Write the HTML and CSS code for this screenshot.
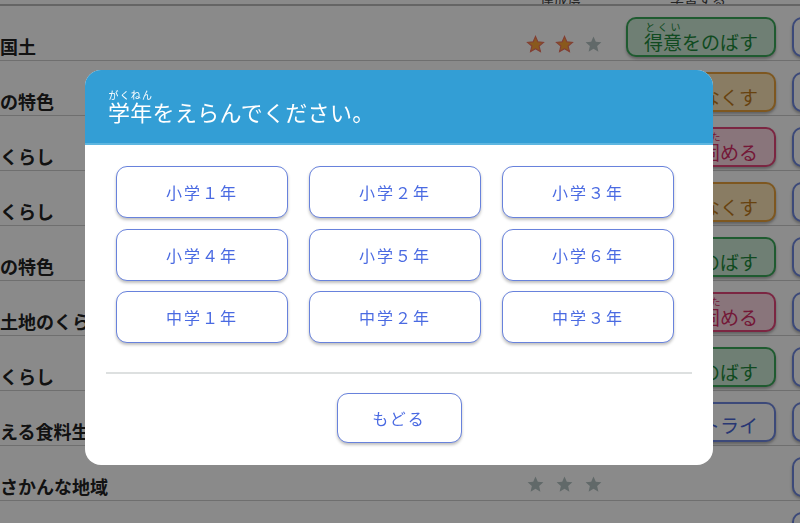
FILE: index.html
```html
<!DOCTYPE html>
<html lang="ja">

<head>
    <meta charset="UTF-8">
    <meta name="viewport" content="width=device-width, initial-scale=1.0">
    <title>学年をえらぶ</title>
    <link rel="stylesheet" href="styles.css">
</head>

<body>
    <div class="list">
        <div class="list-head">
            <span class="head-stars">達成度</span>
            <span class="head-btn">学習する</span>
        </div>

        <div class="row">
            <div class="name">国土</div>
            <div class="stars">
                <svg class="star on" viewBox="0 0 24 24"><polygon points="12,2 14.9,8.6 22,9.3 16.6,14 18.2,21 12,17.3 5.8,21 7.4,14 2,9.3 9.1,8.6"/></svg>
                <svg class="star on" viewBox="0 0 24 24"><polygon points="12,2 14.9,8.6 22,9.3 16.6,14 18.2,21 12,17.3 5.8,21 7.4,14 2,9.3 9.1,8.6"/></svg>
                <svg class="star" viewBox="0 0 24 24"><polygon points="12,2 14.9,8.6 22,9.3 16.6,14 18.2,21 12,17.3 5.8,21 7.4,14 2,9.3 9.1,8.6"/></svg>
            </div>
            <button class="task green"><ruby>得意<rt>とくい</rt></ruby>をのばす</button>
            <button class="task blue">もくじ</button>
        </div>

        <div class="row">
            <div class="name">の特色</div>
            <div class="stars"></div>
            <button class="task yellow"><ruby>苦手<rt>にがて</rt></ruby>をなくす</button>
            <button class="task blue">もくじ</button>
        </div>

        <div class="row">
            <div class="name">くらし</div>
            <div class="stars"></div>
            <button class="task pink">きそを<ruby>固<rt>かた</rt></ruby>める</button>
            <button class="task blue">もくじ</button>
        </div>

        <div class="row">
            <div class="name">くらし</div>
            <div class="stars"></div>
            <button class="task yellow"><ruby>苦手<rt>にがて</rt></ruby>をなくす</button>
            <button class="task blue">もくじ</button>
        </div>

        <div class="row">
            <div class="name">の特色</div>
            <div class="stars"></div>
            <button class="task green"><ruby>得意<rt>とくい</rt></ruby>をのばす</button>
            <button class="task blue">もくじ</button>
        </div>

        <div class="row">
            <div class="name">土地のくらし</div>
            <div class="stars"></div>
            <button class="task pink">きそを<ruby>固<rt>かた</rt></ruby>める</button>
            <button class="task blue">もくじ</button>
        </div>

        <div class="row">
            <div class="name">くらし</div>
            <div class="stars"></div>
            <button class="task green"><ruby>得意<rt>とくい</rt></ruby>をのばす</button>
            <button class="task blue">もくじ</button>
        </div>

        <div class="row">
            <div class="name">える食料生産</div>
            <div class="stars"></div>
            <button class="task blue">苦手にトライ</button>
            <button class="task blue">もくじ</button>
        </div>

        <div class="row">
            <div class="name">さかんな地域</div>
            <div class="stars">
                <svg class="star" viewBox="0 0 24 24"><polygon points="12,2 14.9,8.6 22,9.3 16.6,14 18.2,21 12,17.3 5.8,21 7.4,14 2,9.3 9.1,8.6"/></svg>
                <svg class="star" viewBox="0 0 24 24"><polygon points="12,2 14.9,8.6 22,9.3 16.6,14 18.2,21 12,17.3 5.8,21 7.4,14 2,9.3 9.1,8.6"/></svg>
                <svg class="star" viewBox="0 0 24 24"><polygon points="12,2 14.9,8.6 22,9.3 16.6,14 18.2,21 12,17.3 5.8,21 7.4,14 2,9.3 9.1,8.6"/></svg>
            </div>
            <div></div>
            <button class="task blue">もくじ</button>
        </div>

        <div class="row">
            <div class="name"></div>
            <div class="stars"></div>
            <div></div>
            <button class="task blue">もくじ</button>
        </div>
    </div>

    <!-- 学年えらびのダイアログ -->
    <div class="overlay">
        <div class="modal">
            <div class="modal-header">
                <h1><ruby>学年<rt>がくねん</rt></ruby>をえらんでください。</h1>
            </div>
            <div class="grade-grid">
                <button class="grade">小学１年</button>
                <button class="grade">小学２年</button>
                <button class="grade">小学３年</button>
                <button class="grade">小学４年</button>
                <button class="grade">小学５年</button>
                <button class="grade">小学６年</button>
                <button class="grade">中学１年</button>
                <button class="grade">中学２年</button>
                <button class="grade">中学３年</button>
            </div>
            <hr class="divider">
            <div class="modal-footer">
                <button class="grade back">もどる</button>
            </div>
        </div>
    </div>
</body>

</html>
```

FILE: styles.css
```css
body {
    font-family: "Noto Sans CJK JP", "Noto Sans", sans-serif;
    margin: 0;
    padding: 0;
    overflow: hidden;
    background-color: white;
    color: #222;
}

.list {
    width: 960px;
}

.list-head {
    height: 4px;
    border-bottom: 2px solid #bbb;
    position: relative;
    overflow: hidden;
    font-size: 14px;
    color: #444;
}

.list-head span {
    position: absolute;
    bottom: -2px;
    line-height: 14px;
}

.head-stars {
    left: 540px;
}

.head-btn {
    left: 670px;
}

.row {
    display: grid;
    grid-template-columns: 520px 106px 166px 150px;
    align-items: end;
    height: 54px;
    border-bottom: 1px solid #cdcdcd;
}

.name {
    font-size: 18px;
    font-weight: bold;
    line-height: 20px;
    margin-bottom: 4px;
    white-space: nowrap;
}

.stars {
    display: flex;
    gap: 10px;
    padding-left: 6px;
    margin-bottom: 6px;
}

.star {
    width: 19px;
    height: 19px;
    fill: #b3c2c2;
}

.star.on {
    fill: #ffa436;
    stroke: #f07560;
    stroke-width: 1.5;
}

.task {
    font-family: inherit;
    width: 150px;
    height: 40px;
    margin-bottom: 3px;
    border-radius: 10px;
    border: 2px solid;
    font-size: 19px;
    line-height: 22px;
    padding: 6px 0 0;
    box-shadow: 0 2px 3px rgba(0, 0, 0, 0.3);
    white-space: nowrap;
}

.task rt {
    font-size: 10px;
    line-height: 8px;
}

.green {
    background-color: #cdebd6;
    border-color: #3aa85a;
    color: #1e8a3c;
}

.yellow {
    background-color: #fde6b8;
    border-color: #e9a23c;
    color: #c07a1a;
}

.pink {
    background-color: #fdd8e4;
    border-color: #e4467a;
    color: #d62e66;
}

.blue {
    background-color: white;
    border-color: #6f88e0;
    color: #4b66d6;
}

/* ダイアログ */
.overlay {
    position: fixed;
    inset: 0;
    background-color: rgba(0, 0, 0, 0.46);
    display: flex;
    justify-content: center;
    align-items: flex-start;
    padding-top: 70px;
}

.modal {
    width: 628px;
    height: 395px;
    margin-left: -2px;
    background-color: white;
    border-radius: 16px;
    overflow: hidden;
}

.modal-header {
    height: 75px;
    box-sizing: border-box;
    background-color: #339ed5;
    border-bottom: 2px solid #5eb6e0;
    padding: 20px 23px 0;
}

.modal-header h1 {
    margin: 0;
    font-size: 22px;
    letter-spacing: 0.3px;
    font-weight: normal;
    color: white;
    line-height: 40px;
}

.modal-header rt {
    font-size: 10px;
    line-height: 10px;
    letter-spacing: 0;
}

.grade-grid {
    display: grid;
    grid-template-columns: repeat(3, 172px);
    grid-auto-rows: 52px;
    column-gap: 21px;
    row-gap: 10.5px;
    padding: 21px 0 0 31px;
}

.grade {
    font-family: inherit;
    background-color: white;
    border: 1.5px solid #6882dc;
    border-radius: 11px;
    color: #4a6ae2;
    font-size: 16px;
    letter-spacing: 2px;
    box-shadow: 0 2px 3px rgba(0, 0, 0, 0.25);
    cursor: pointer;
}

.divider {
    margin: 29px 21px 0;
    border: none;
    border-top: 2px solid #dde0e0;
}

.modal-footer {
    display: flex;
    justify-content: center;
    padding-top: 19px;
}

.back {
    width: 125px;
    height: 50px;
}
```
